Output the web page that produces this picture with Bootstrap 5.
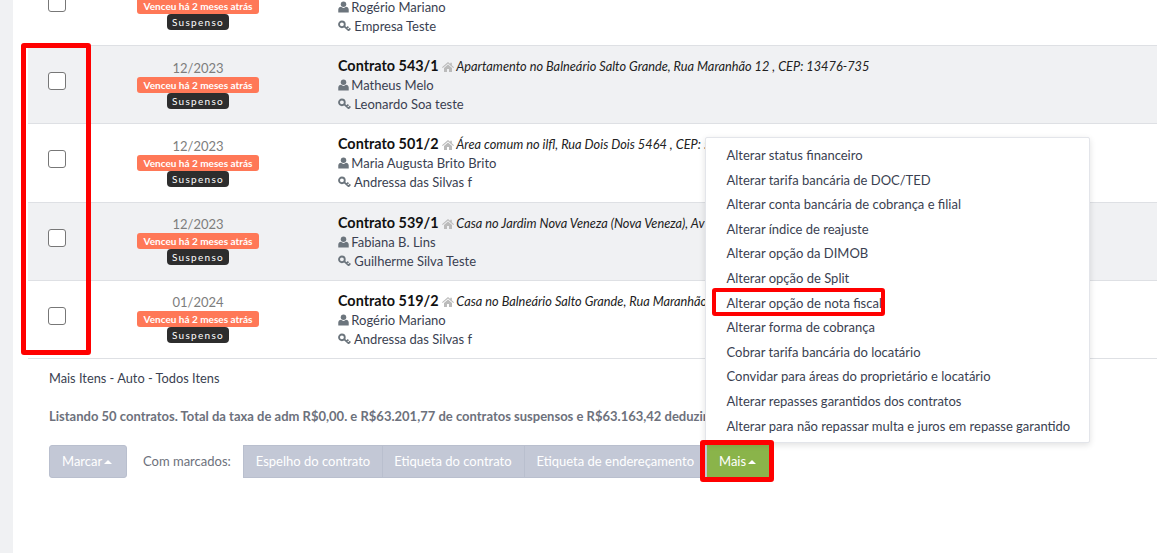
<!DOCTYPE html>
<html lang="pt-BR">
<head>
<meta charset="utf-8">
<title>Contratos</title>
<link href="https://cdn.jsdelivr.net/npm/bootstrap@5.3.0/dist/css/bootstrap.min.css" rel="stylesheet">
<style>
html,body{height:553px;overflow:hidden}
body{background:#f0f1f3;font-family:"Lato",sans-serif;font-size:13px;color:#3a3f51;position:relative}
.sheet{margin-left:13px;background:#fff;height:553px;overflow:hidden;padding-left:15px}
.rows{margin-top:-32.3px}
.entry{height:78.3px;border-bottom:1px solid #dee0e4;white-space:nowrap;overflow:hidden}
.entry.tint{background:#f0f1f3}
.cell-check{width:58px;flex:none;padding-left:20px;padding-bottom:7px}
.cell-check .form-check-input{width:18px;height:18px;margin:0;border:1px solid #777;border-radius:3px;background-color:#fff}
.cell-date{width:224px;margin-right:28px;flex:none;text-align:center;padding-top:13.5px;font-size:13px;line-height:17px;color:#7d7d7d}
.tag-due,.tag-state{display:block;width:max-content;margin:0 auto;font-size:10px;line-height:16px;height:16px;border-radius:3px;color:#fff}
.tag-due{background:#ff7857;font-weight:700;padding:0 7px}
.tag-state{background:#2d2d2d;padding:0 5px 0 5px;letter-spacing:1.3px;border-radius:4px}
.cell-info{padding-top:10px;color:#3a3f51;font-size:13px;line-height:19px}
.cell-info b{font-size:14.4px;color:#111;font-weight:700;line-height:19px}
.cell-info i{font-size:12.75px;color:#222;margin-left:-1px}
.ic{display:inline-block;vertical-align:-1px}
.ic-user{margin-right:-1px}
.pager{padding:10px 0 0 21px;line-height:18px;color:#3a3f51;font-size:12.8px}
.summary{padding:20px 0 0 21px;line-height:18px;color:#6d717c;font-weight:700;white-space:nowrap}
.actions{padding:20px 0 0 21px}
.btn-soft{background:#c3c8d6;border:1px solid #b9bfce;color:#fff;font-size:13px;height:33px;line-height:31px;padding:0 12px;border-radius:0;white-space:nowrap}
.btn-soft:hover{background:#c3c8d6;color:#fff;border-color:#b9bfce}
.btn-mark{border-radius:3px;width:78px;text-align:left}
.label-marked{margin:0 12px 0 16px;color:#6d717c}
.btn-second{padding:0 12px 0 11px}
.btn-third{padding:0 13px 0 12px}
.btn-more{background:#8ab44a;border-color:#8ab44a;width:62px;text-align:left;padding-left:11px}
.btn-more:hover{background:#8ab44a;border-color:#8ab44a}
.caret{display:inline-block;width:0;height:0;border-left:4px solid transparent;border-right:4px solid transparent;border-bottom:4px solid #fff;vertical-align:2px;margin-left:2px}
.menu-more{position:absolute;left:705px;top:137px;width:385px;height:306px;margin:0;padding:5px 0;border:1px solid #e3e5ea;border-radius:2px;box-shadow:0 2px 6px rgba(0,0,0,.12);display:block;z-index:5;background:#fff}
.menu-more .dropdown-item{padding:0 20.5px;height:24.6px;line-height:24px;font-size:13px;color:#3a3f51}
.mark-box{position:absolute;border:5px solid #f00;border-radius:3px;z-index:10;pointer-events:none}
.mark-a{left:21px;top:43px;width:70px;height:312px}
.mark-b{left:712px;top:288px;width:173px;height:28px;border-width:4px}
.mark-c{left:700px;top:440px;width:74px;height:42px}
</style>
</head>
<body>
<svg width="0" height="0" class="position-absolute">
<defs>
<symbol id="i-user" viewBox="0 0 12 12"><circle cx="6" cy="3" r="3" fill="currentColor"/><path d="M.3 12V8.800C.3 7.200 1.600 5.800 3.400 5.800c.7.700 1.600 1.200 2.600 1.200s1.900-.5 2.600-1.200c1.800 0 3.100 1.400 3.100 3V12z" fill="currentColor"/></symbol>
<symbol id="i-key" viewBox="0 0 14 12"><circle cx="4.200" cy="4.200" r="3.100" fill="none" stroke="currentColor" stroke-width="2"/><path d="M6.500 6.200l5 4.600M9.200 8.600l2-2M11.300 10.600l2-2" fill="none" stroke="currentColor" stroke-width="1.900"/></symbol>
<symbol id="i-home" viewBox="0 0 12 10"><path d="M6 0L0 5.200l.7.700L6 1.400l5.300 4.500.7-.7L9.800 3.300V.7H8.300v1.300zM2 6v4h3V7h2v3h3V6L6 2.500z" fill="currentColor"/></symbol>
</defs>
</svg>

<main class="sheet">
  <div class="rows">
    <div class="entry d-flex">
      <div class="cell-check d-flex align-items-center"><input class="form-check-input" type="checkbox" aria-label="Marcar"></div>
      <div class="cell-date">01/2024<span class="tag-due">Venceu há 2 meses atrás</span><span class="tag-state">Suspenso</span></div>
      <div class="cell-info"><b>Contrato</b><br><svg class="ic ic-user text-secondary" width="11" height="12"><use href="#i-user"/></svg> Rogério Mariano<br><svg class="ic text-secondary" width="13" height="12"><use href="#i-key"/></svg> Empresa Teste</div>
    </div>
    <div class="entry tint d-flex">
      <div class="cell-check d-flex align-items-center"><input class="form-check-input" type="checkbox" aria-label="Marcar"></div>
      <div class="cell-date">12/2023<span class="tag-due">Venceu há 2 meses atrás</span><span class="tag-state">Suspenso</span></div>
      <div class="cell-info"><b>Contrato 543/1</b> <svg class="ic" width="12" height="10" color="#bbb"><use href="#i-home"/></svg> <i>Apartamento no Balneário Salto Grande, Rua Maranhão 12 , CEP: 13476-735</i><br><svg class="ic ic-user text-secondary" width="11" height="12"><use href="#i-user"/></svg> Matheus Melo<br><svg class="ic text-secondary" width="13" height="12"><use href="#i-key"/></svg> Leonardo Soa teste</div>
    </div>
    <div class="entry d-flex">
      <div class="cell-check d-flex align-items-center"><input class="form-check-input" type="checkbox" aria-label="Marcar"></div>
      <div class="cell-date">12/2023<span class="tag-due">Venceu há 2 meses atrás</span><span class="tag-state">Suspenso</span></div>
      <div class="cell-info"><b>Contrato 501/2</b> <svg class="ic" width="12" height="10" color="#bbb"><use href="#i-home"/></svg> <i>Área comum no ilfl, Rua Dois Dois 5464 , CEP: 5</i><br><svg class="ic ic-user text-secondary" width="11" height="12"><use href="#i-user"/></svg> Maria Augusta Brito Brito<br><svg class="ic text-secondary" width="13" height="12"><use href="#i-key"/></svg> Andressa das Silvas f</div>
    </div>
    <div class="entry tint d-flex">
      <div class="cell-check d-flex align-items-center"><input class="form-check-input" type="checkbox" aria-label="Marcar"></div>
      <div class="cell-date">12/2023<span class="tag-due">Venceu há 2 meses atrás</span><span class="tag-state">Suspenso</span></div>
      <div class="cell-info"><b>Contrato 539/1</b> <svg class="ic" width="12" height="10" color="#bbb"><use href="#i-home"/></svg> <i>Casa no Jardim Nova Veneza (Nova Veneza), Av</i><br><svg class="ic ic-user text-secondary" width="11" height="12"><use href="#i-user"/></svg> Fabiana B. Lins<br><svg class="ic text-secondary" width="13" height="12"><use href="#i-key"/></svg> Guilherme Silva Teste</div>
    </div>
    <div class="entry d-flex">
      <div class="cell-check d-flex align-items-center"><input class="form-check-input" type="checkbox" aria-label="Marcar"></div>
      <div class="cell-date">01/2024<span class="tag-due">Venceu há 2 meses atrás</span><span class="tag-state">Suspenso</span></div>
      <div class="cell-info"><b>Contrato 519/2</b> <svg class="ic" width="12" height="10" color="#bbb"><use href="#i-home"/></svg> <i>Casa no Balneário Salto Grande, Rua Maranhão</i><br><svg class="ic ic-user text-secondary" width="11" height="12"><use href="#i-user"/></svg> Rogério Mariano<br><svg class="ic text-secondary" width="13" height="12"><use href="#i-key"/></svg> Andressa das Silvas f</div>
    </div>
  </div>

  <div class="pager">Mais Itens - Auto - Todos Itens</div>
  <div class="summary">Listando 50 contratos. Total da taxa de adm R$0,00. e R$63.201,77 de contratos suspensos e R$63.163,42 deduzindo</div>
  <div class="actions d-flex align-items-center">
    <button type="button" class="btn btn-soft btn-mark">Marcar<span class="caret"></span></button>
    <span class="label-marked">Com marcados:</span>
    <div class="btn-group">
      <button type="button" class="btn btn-soft">Espelho do contrato</button>
      <button type="button" class="btn btn-soft btn-second">Etiqueta do contrato</button>
      <button type="button" class="btn btn-soft btn-third">Etiqueta de endereçamento</button>
      <button type="button" class="btn btn-soft btn-more">Mais<span class="caret"></span></button>
    </div>
  </div>
</main>

<ul class="dropdown-menu menu-more list-unstyled">
  <li><a class="dropdown-item" href="#">Alterar status financeiro</a></li>
  <li><a class="dropdown-item" href="#">Alterar tarifa bancária de DOC/TED</a></li>
  <li><a class="dropdown-item" href="#">Alterar conta bancária de cobrança e filial</a></li>
  <li><a class="dropdown-item" href="#">Alterar índice de reajuste</a></li>
  <li><a class="dropdown-item" href="#">Alterar opção da DIMOB</a></li>
  <li><a class="dropdown-item" href="#">Alterar opção de Split</a></li>
  <li><a class="dropdown-item" href="#">Alterar opção de nota fiscal</a></li>
  <li><a class="dropdown-item" href="#">Alterar forma de cobrança</a></li>
  <li><a class="dropdown-item" href="#">Cobrar tarifa bancária do locatário</a></li>
  <li><a class="dropdown-item" href="#">Convidar para áreas do proprietário e locatário</a></li>
  <li><a class="dropdown-item" href="#">Alterar repasses garantidos dos contratos</a></li>
  <li><a class="dropdown-item" href="#">Alterar para não repassar multa e juros em repasse garantido</a></li>
</ul>

<div class="mark-box mark-a"></div>
<div class="mark-box mark-b"></div>
<div class="mark-box mark-c"></div>
<script src="https://cdn.jsdelivr.net/npm/bootstrap@5.3.0/dist/js/bootstrap.bundle.min.js"></script>
</body>
</html>
